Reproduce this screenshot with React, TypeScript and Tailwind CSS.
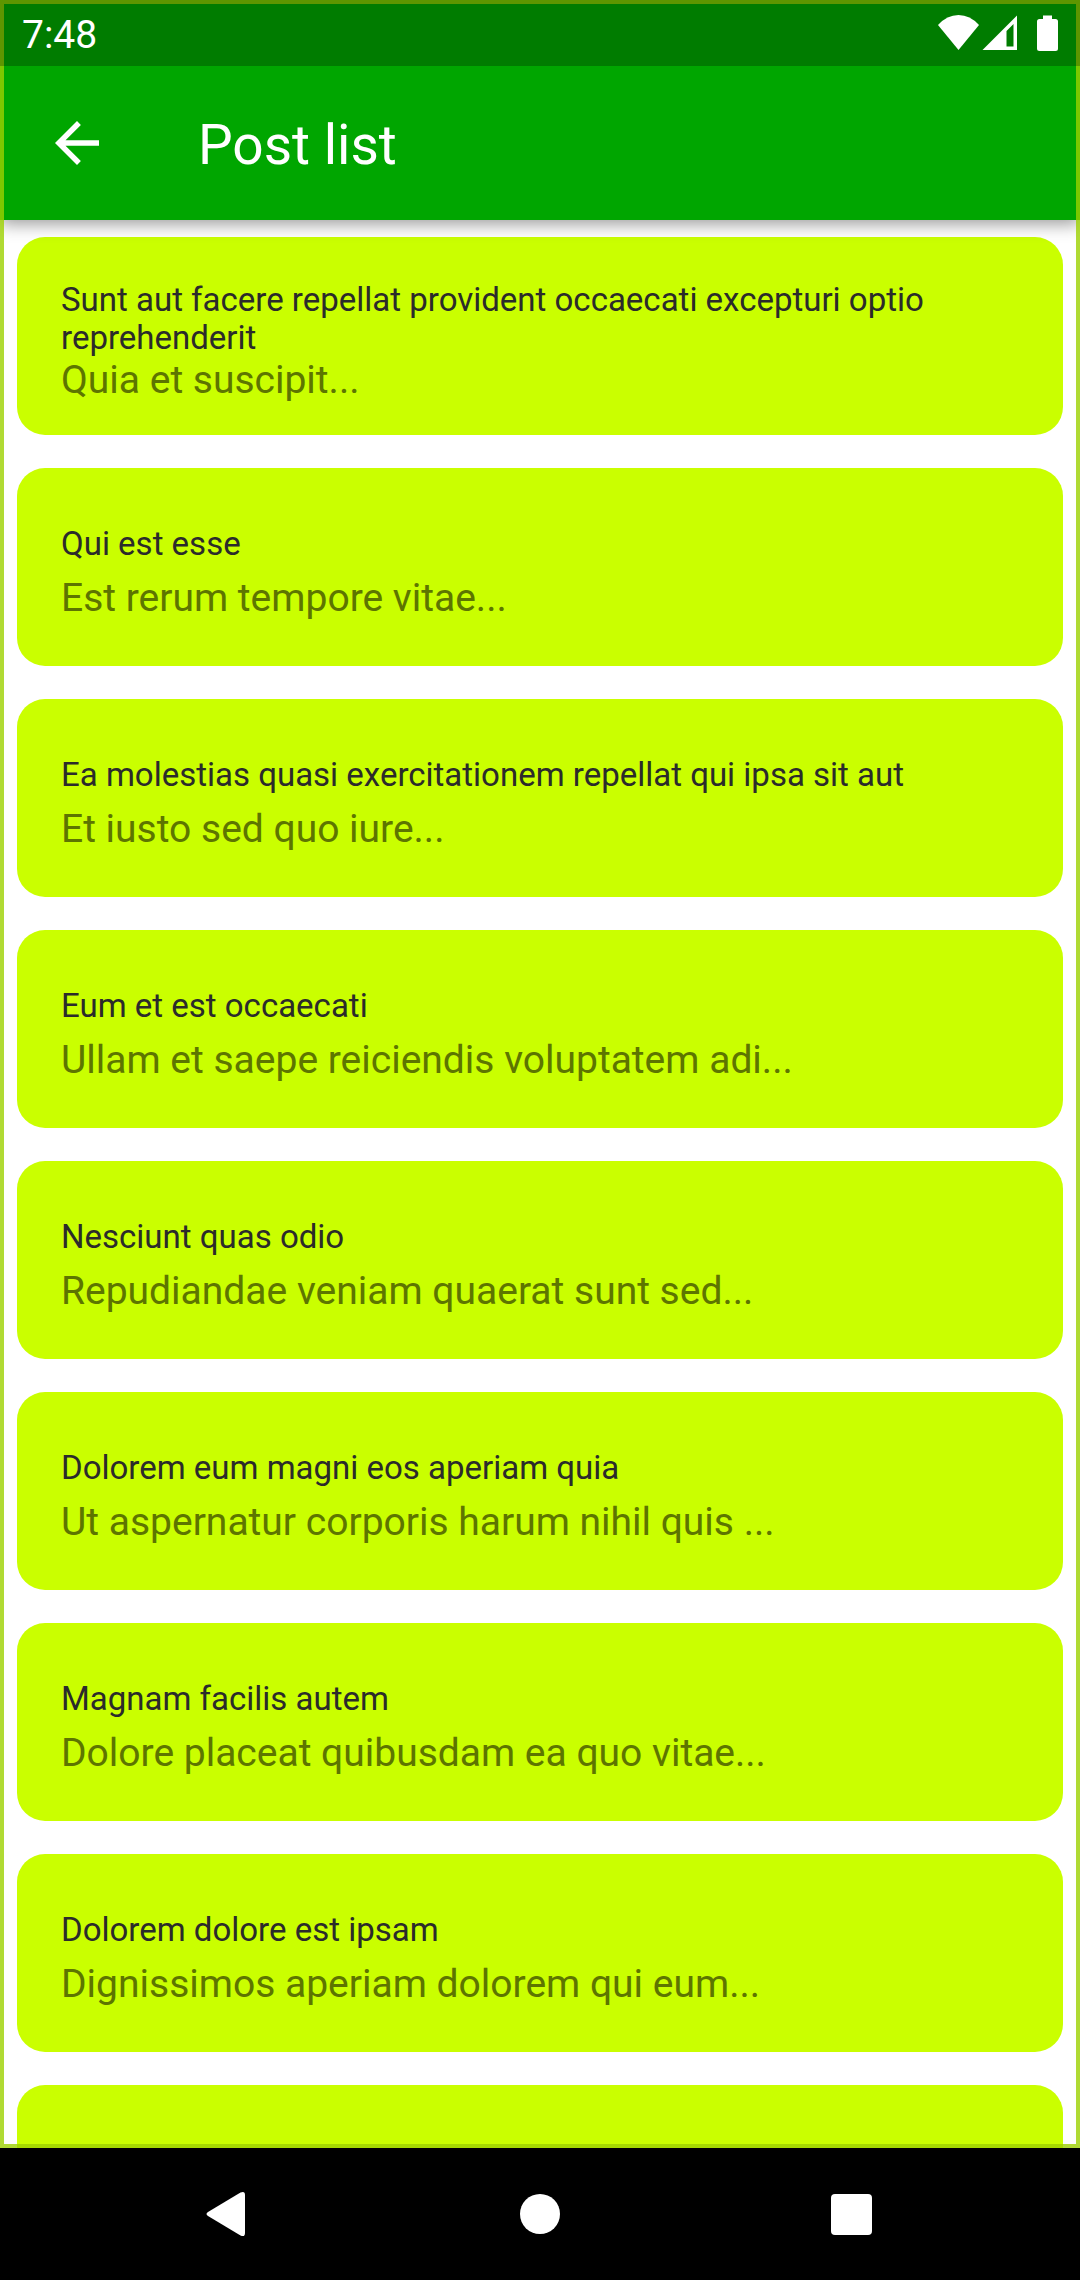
import React from "react";

type Post = { title: string; body: string; twoLine?: boolean };

const posts: Post[] = [
  { title: "Sunt aut facere repellat provident occaecati excepturi optio reprehenderit", body: "Quia et suscipit...", twoLine: true },
  { title: "Qui est esse", body: "Est rerum tempore vitae..." },
  { title: "Ea molestias quasi exercitationem repellat qui ipsa sit aut", body: "Et iusto sed quo iure..." },
  { title: "Eum et est occaecati", body: "Ullam et saepe reiciendis voluptatem adi..." },
  { title: "Nesciunt quas odio", body: "Repudiandae veniam quaerat sunt sed..." },
  { title: "Dolorem eum magni eos aperiam quia", body: "Ut aspernatur corporis harum nihil quis ..." },
  { title: "Magnam facilis autem", body: "Dolore placeat quibusdam ea quo vitae..." },
  { title: "Dolorem dolore est ipsam", body: "Dignissimos aperiam dolorem qui eum..." },
];

function StatusBar() {
  return (
    <div className="relative z-20 flex h-[66px] shrink-0 items-center justify-between bg-black/25 px-[22px] text-white">
      <time className="pt-[4px] text-[39px] leading-[46px]">7:48</time>
      <div className="flex items-center">
        <svg className="h-[36px] w-[42px]" viewBox="0 0 42 36" fill="currentColor" aria-label="Wi-Fi">
          <path d="M0 10 Q9 0 20.500 0 Q32 0 41 10 L20.500 35Z" />
        </svg>
        <svg className="ml-[2px] h-[36px] w-[36px]" viewBox="0 0 36 36" aria-label="Mobile signal">
          <path fill="currentColor" fillRule="evenodd" d="M35 0.500V35H0.500ZM31.500 9L24.500 16V31.500H31.500Z" />
        </svg>
        <svg className="ml-[18px] h-[36px] w-[22px]" viewBox="0 0 22 36" fill="currentColor" aria-label="Battery">
          <path d="M7 0.500H16V4H19.500Q22 4 22 6.500V33.500Q22 36 19.500 36H3.500Q1 36 1 33.500V6.500Q1 4 3.500 4H7Z" />
        </svg>
      </div>
    </div>
  );
}

function PostCard({ post }: { post: Post }) {
  return (
    <li
      className={
        post.twoLine
          ? "flex h-[198px] shrink-0 flex-col rounded-[28px] bg-[#caff00] px-[44px] pt-[44px]"
          : "flex h-[198px] shrink-0 flex-col gap-[12px] rounded-[28px] bg-[#caff00] px-[44px] pt-[57px]"
      }
    >
      <h2 className="text-[33px] leading-[38px] text-[#2b2b2b]">{post.title}</h2>
      <p className="text-[39px] leading-[46px] text-[#5d7500]">{post.body}</p>
    </li>
  );
}

export default function App() {
  return (
    <div className="flex h-screen flex-col overflow-hidden bg-black font-['Roboto',sans-serif]">
      <div className="relative flex min-h-0 flex-1 flex-col bg-white">
        <div className="relative shrink-0 bg-[#00a600] shadow-[0_4px_16px_rgba(0,0,0,0.4)]">
          <StatusBar />
          <header className="flex h-[154px] items-center pl-[44px] text-white">
            <button type="button" aria-label="Back" className="flex size-[66px] items-center justify-center">
              <svg className="size-[66px]" viewBox="0 0 24 24" fill="currentColor">
                <path d="M20 11H7.830l5.590-5.590L12 4l-8 8 8 8 1.410-1.410L7.830 13H20v-2z" />
              </svg>
            </button>
            <h1 className="ml-[88px] pt-[4px] text-[55px] leading-[64px]">Post list</h1>
          </header>
        </div>
        <ul className="flex min-h-0 flex-1 flex-col gap-[33px] overflow-hidden px-[17px] pt-[17px]">
          {posts.map((post) => (
            <PostCard key={post.title} post={post} />
          ))}
          <li className="h-[198px] shrink-0 rounded-[28px] bg-[#caff00]" aria-hidden="true" />
        </ul>
        <div className="pointer-events-none absolute inset-0 z-10 border-4 border-[#9cd100]/80" />
      </div>
      <nav className="flex h-[132px] shrink-0 items-center justify-around bg-black px-[73px] text-white">
        <button type="button" aria-label="Back" className="flex size-[66px] items-center justify-center">
          <svg className="h-[46px] w-[46px]" viewBox="0 0 46 46" fill="currentColor">
            <path d="M34.500 1.500Q39 -0.500 39 4V42Q39 46.500 34.500 44.500L2 25Q-1 23 2 21Z" />
          </svg>
        </button>
        <button type="button" aria-label="Home" className="flex size-[66px] items-center justify-center">
          <span className="size-[40px] rounded-full bg-white" />
        </button>
        <button type="button" aria-label="Overview" className="flex size-[66px] items-center justify-center">
          <span className="size-[41px] rounded-[4px] bg-white" />
        </button>
      </nav>
    </div>
  );
}
